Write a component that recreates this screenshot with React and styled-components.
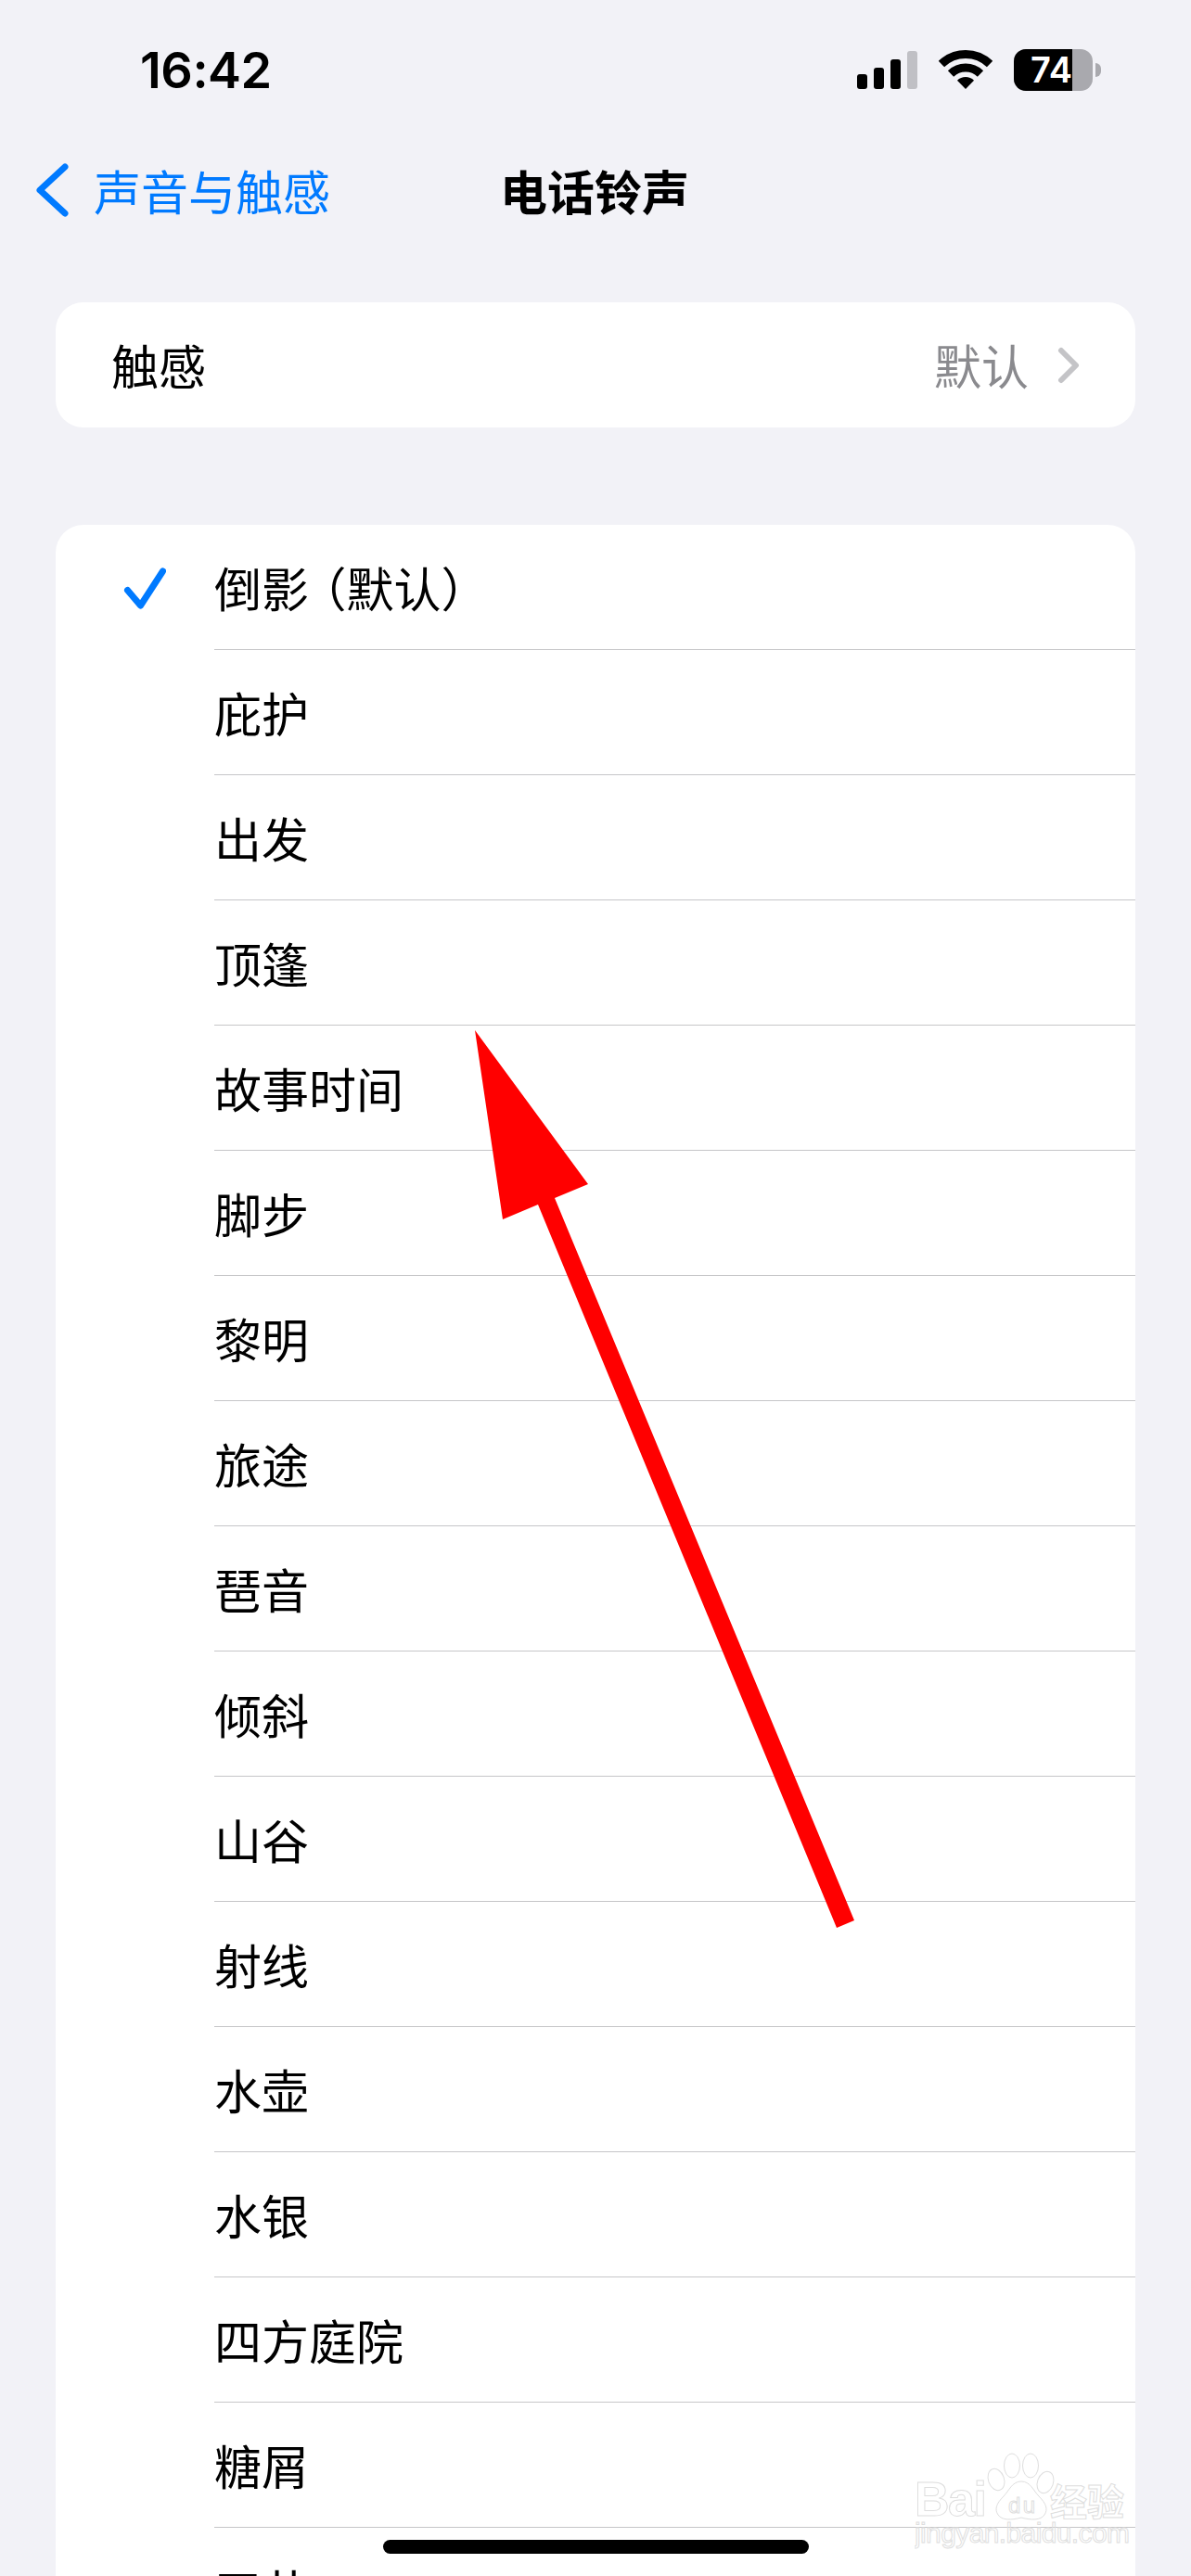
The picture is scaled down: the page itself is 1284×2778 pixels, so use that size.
import styled, { createGlobalStyle } from "styled-components";

const CJK = `"Noto Sans CJK SC", "Noto Sans", sans-serif`;

const GlobalStyle = createGlobalStyle`
  html, body {
    margin: 0;
    padding: 0;
    background: #f2f2f7;
  }
`;

const tones = [
  "庇护", "出发", "顶篷", "故事时间", "脚步", "黎明", "旅途", "琶音",
  "倾斜", "山谷", "射线", "水壶", "水银", "四方庭院", "糖屑", "天井",
];

function App() {
  return (
    <Page>
      <GlobalStyle />
      <StatusBar>
        <Clock>16:42</Clock>
        <StatusIcons>
          <Signal>
            <SignalBar $h={16} />
            <SignalBar $h={23} />
            <SignalBar $h={32} />
            <SignalBar $h={41} $off />
          </Signal>
          <svg width="58" height="42" viewBox="0 0 58 42">
            <path d="M2.95 15.03A37.5 37.5 0 0 1 55.05 15.03" fill="none" stroke="#000" strokeWidth="9" />
            <path d="M13.02 25.46A23 23 0 0 1 44.98 25.46" fill="none" stroke="#000" strokeWidth="9" />
            <path d="M29 42L19.97 32.65A13 13 0 0 1 38.03 32.65Z" fill="#000" />
          </svg>
          <Battery>
            <BatteryBody>
              <BatteryFill>74</BatteryFill>
            </BatteryBody>
            <BatteryCap />
          </Battery>
        </StatusIcons>
      </StatusBar>

      <NavBar>
        <BackLink>
          <svg width="40" height="64" viewBox="0 0 40 64">
            <polyline points="34,7 7,32 34,57" fill="none" stroke="#007aff" strokeWidth="7" strokeLinecap="round" strokeLinejoin="round" />
          </svg>
          <span>声音与触感</span>
        </BackLink>
        <Title>电话铃声</Title>
      </NavBar>

      <DetailGroup>
        <RowLabel>触感</RowLabel>
        <DetailValue>
          <span>默认</span>
          <svg width="24" height="40" viewBox="0 0 24 40">
            <polyline points="4,4 20,20 4,36" fill="none" stroke="#c4c4c7" strokeWidth="6" strokeLinecap="round" strokeLinejoin="round" />
          </svg>
        </DetailValue>
      </DetailGroup>

      <ToneGroup>
        <ToneRow>
          <CheckSlot>
            <svg width="48" height="46" viewBox="0 0 48 46">
              <polyline points="6.5,25.5 20.5,42 44.5,5" fill="none" stroke="#007aff" strokeWidth="7" strokeLinecap="round" strokeLinejoin="round" />
            </svg>
          </CheckSlot>
          <ToneLabel>
            <RowLabel>
              倒影<Paren $gap={15}>（</Paren>默认<Paren>）</Paren>
            </RowLabel>
          </ToneLabel>
        </ToneRow>
        {tones.map((name) => (
          <ToneRow key={name}>
            <CheckSlot />
            <ToneLabel>
              <RowLabel>{name}</RowLabel>
            </ToneLabel>
          </ToneRow>
        ))}
      </ToneGroup>

      <Arrow viewBox="0 0 1284 2778">
        <polygon points="512,1111 634,1277 598,1292 921,2071 902,2079 580,1299 542,1315" fill="#ff0000" />
      </Arrow>

      <Watermark viewBox="0 0 240 110">
        <g fill="none" stroke="#dedede" strokeWidth="1">
          <text x="0" y="71" fontFamily="Liberation Sans, sans-serif" fontSize="52" fontWeight="700" textLength="78">Bai</text>
          <ellipse cx="105" cy="17" rx="8.5" ry="13" />
          <ellipse cx="125" cy="17" rx="8.5" ry="13" />
          <ellipse cx="88" cy="32" rx="8.5" ry="12" transform="rotate(-20 88 32)" />
          <ellipse cx="141" cy="35" rx="8.5" ry="12" transform="rotate(20 141 35)" />
          <path d="M115 34C125 34 128 44 134 50C142 58 144 64 140 70C136 76 126 76 115 73C104 76 94 76 90 70C86 64 88 58 96 50C102 44 105 34 115 34Z" />
          <text x="101" y="68" fontFamily="Liberation Sans, sans-serif" fontSize="24" textLength="29">du</text>
          <text x="146" y="71" fontFamily={CJK} fontSize="40" fontWeight="700" textLength="80">经验</text>
          <text x="0" y="100" fontFamily="Liberation Sans, sans-serif" fontSize="30" textLength="232">jingyan.baidu.com</text>
        </g>
      </Watermark>

      <HomeIndicator />
    </Page>
  );
}

export default App;

const Page = styled.div`
  position: relative;
  width: 1284px;
  height: 2778px;
  overflow: hidden;
  background: #f2f2f7;
  color: #000;
  font-family: ${CJK};
`;

const StatusBar = styled.div`
  display: flex;
  align-items: center;
  justify-content: space-between;
  height: 45px;
  padding: 53px 97px 0 151px;
`;

const Clock = styled.div`
  font-family: Inter, "Liberation Sans", sans-serif;
  font-size: 54px;
  font-weight: 600;
  line-height: 45px;
  letter-spacing: -0.5px;
`;

const StatusIcons = styled.div`
  display: flex;
  align-items: flex-end;
  gap: 23px;
  svg {
    display: block;
    margin-bottom: 2px;
  }
`;

const Signal = styled.div`
  display: flex;
  align-items: flex-end;
  gap: 7px;
  margin-bottom: 2px;
`;

const SignalBar = styled.div`
  width: 11px;
  height: ${(p) => p.$h}px;
  border-radius: 3px;
  background: ${(p) => (p.$off ? "#c0c0c5" : "#000")};
`;

const Battery = styled.div`
  display: flex;
  align-items: center;
  gap: 3px;
`;

const BatteryBody = styled.div`
  width: 85px;
  height: 45px;
  border-radius: 13px;
  overflow: hidden;
  background: #a9a9ae;
`;

const BatteryFill = styled.div`
  width: 63px;
  height: 45px;
  box-sizing: border-box;
  background: #000;
  color: #fff;
  font-family: Inter, "Liberation Sans", sans-serif;
  font-size: 38px;
  font-weight: 600;
  line-height: 45px;
  text-align: right;
`;

const BatteryCap = styled.div`
  width: 6px;
  height: 15px;
  border-radius: 0 8px 8px 0;
  background: #a9a9ae;
`;

const NavBar = styled.div`
  display: grid;
  grid-template-columns: 1fr auto 1fr;
  align-items: center;
  height: 90px;
  margin-top: 62px;
`;

const BackLink = styled.div`
  display: flex;
  align-items: center;
  gap: 25px;
  padding-left: 36px;
  color: #007aff;
  font-size: 51px;
  line-height: 90px;
  svg {
    display: block;
  }
`;

const Title = styled.div`
  margin-left: -2px;
  font-size: 51px;
  font-weight: 700;
  line-height: 90px;
`;

const DetailGroup = styled.div`
  display: flex;
  align-items: center;
  justify-content: space-between;
  height: 135px;
  margin: 76px 60px 0;
  padding: 0 60px;
  border-radius: 30px;
  background: #fff;
`;

const DetailValue = styled.div`
  display: flex;
  align-items: center;
  gap: 31px;
  color: #8a8a8e;
  font-size: 51px;
  line-height: 1.2;
  svg {
    display: block;
  }
`;

const ToneGroup = styled.div`
  margin: 105px 60px 0;
  border-radius: 30px;
  background: #fff;
`;

const ToneRow = styled.div`
  display: flex;
  height: 135px;
`;

const CheckSlot = styled.div`
  flex: none;
  display: flex;
  align-items: center;
  box-sizing: border-box;
  width: 171px;
  padding-left: 71px;
  svg {
    display: block;
  }
`;

const ToneLabel = styled.div`
  flex: 1;
  display: flex;
  align-items: center;
  box-sizing: border-box;
  padding-top: 2px;
  border-bottom: 1px solid #c6c6c8;
`;

const RowLabel = styled.span`
  font-size: 51px;
  line-height: 1.2;
  white-space: nowrap;
`;

const Paren = styled.span`
  margin-left: ${(p) => p.$gap || 0}px;
  font-feature-settings: "halt";
`;

const Arrow = styled.svg`
  position: absolute;
  top: 0;
  left: 0;
  width: 1284px;
  height: 2778px;
`;

const Watermark = styled.svg`
  position: absolute;
  top: 2642px;
  left: 986px;
  width: 240px;
  height: 110px;
`;

const HomeIndicator = styled.div`
  position: absolute;
  left: 413px;
  top: 2739px;
  width: 459px;
  height: 15px;
  border-radius: 8px;
  background: #000;
`;
